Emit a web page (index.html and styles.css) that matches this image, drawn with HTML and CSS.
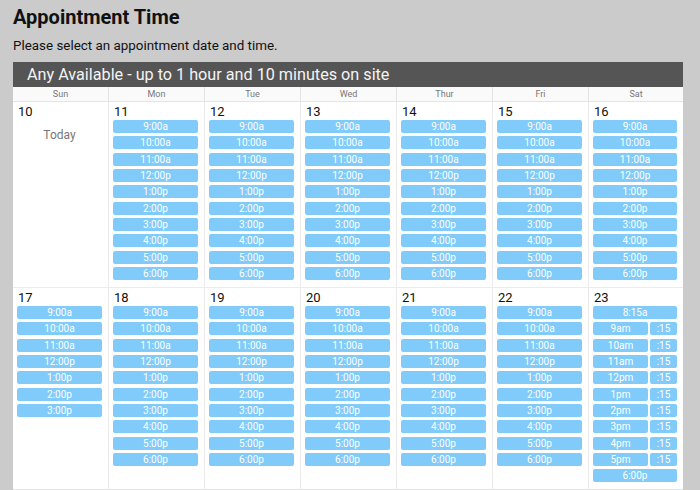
FILE: index.html
```html
<!DOCTYPE html>
<html>
<head>
<meta charset="utf-8">
<link rel="stylesheet" href="styles.css">
</head>
<body>
<h1 class="title">Appointment Time</h1>
<p class="sub">Please select an appointment date and time.</p>
<div class="panel">
  <div class="bar">Any Available - up to 1 hour and 10 minutes on site</div>
  <div class="cal">
    <div class="dow">Sun</div><div class="dow">Mon</div><div class="dow">Tue</div><div class="dow">Wed</div><div class="dow">Thur</div><div class="dow">Fri</div><div class="dow">Sat</div>

    <div class="cell"><div class="date">10</div><div class="today">Today</div></div>
    <div class="cell"><div class="date">11</div><div class="slots"><span class="slot">9:00a</span><span class="slot">10:00a</span><span class="slot">11:00a</span><span class="slot">12:00p</span><span class="slot">1:00p</span><span class="slot">2:00p</span><span class="slot">3:00p</span><span class="slot">4:00p</span><span class="slot">5:00p</span><span class="slot">6:00p</span></div></div>
    <div class="cell"><div class="date">12</div><div class="slots"><span class="slot">9:00a</span><span class="slot">10:00a</span><span class="slot">11:00a</span><span class="slot">12:00p</span><span class="slot">1:00p</span><span class="slot">2:00p</span><span class="slot">3:00p</span><span class="slot">4:00p</span><span class="slot">5:00p</span><span class="slot">6:00p</span></div></div>
    <div class="cell"><div class="date">13</div><div class="slots"><span class="slot">9:00a</span><span class="slot">10:00a</span><span class="slot">11:00a</span><span class="slot">12:00p</span><span class="slot">1:00p</span><span class="slot">2:00p</span><span class="slot">3:00p</span><span class="slot">4:00p</span><span class="slot">5:00p</span><span class="slot">6:00p</span></div></div>
    <div class="cell"><div class="date">14</div><div class="slots"><span class="slot">9:00a</span><span class="slot">10:00a</span><span class="slot">11:00a</span><span class="slot">12:00p</span><span class="slot">1:00p</span><span class="slot">2:00p</span><span class="slot">3:00p</span><span class="slot">4:00p</span><span class="slot">5:00p</span><span class="slot">6:00p</span></div></div>
    <div class="cell"><div class="date">15</div><div class="slots"><span class="slot">9:00a</span><span class="slot">10:00a</span><span class="slot">11:00a</span><span class="slot">12:00p</span><span class="slot">1:00p</span><span class="slot">2:00p</span><span class="slot">3:00p</span><span class="slot">4:00p</span><span class="slot">5:00p</span><span class="slot">6:00p</span></div></div>
    <div class="cell"><div class="date">16</div><div class="slots"><span class="slot">9:00a</span><span class="slot">10:00a</span><span class="slot">11:00a</span><span class="slot">12:00p</span><span class="slot">1:00p</span><span class="slot">2:00p</span><span class="slot">3:00p</span><span class="slot">4:00p</span><span class="slot">5:00p</span><span class="slot">6:00p</span></div></div>

    <div class="cell"><div class="date">17</div><div class="slots"><span class="slot">9:00a</span><span class="slot">10:00a</span><span class="slot">11:00a</span><span class="slot">12:00p</span><span class="slot">1:00p</span><span class="slot">2:00p</span><span class="slot">3:00p</span></div></div>
    <div class="cell"><div class="date">18</div><div class="slots"><span class="slot">9:00a</span><span class="slot">10:00a</span><span class="slot">11:00a</span><span class="slot">12:00p</span><span class="slot">1:00p</span><span class="slot">2:00p</span><span class="slot">3:00p</span><span class="slot">4:00p</span><span class="slot">5:00p</span><span class="slot">6:00p</span></div></div>
    <div class="cell"><div class="date">19</div><div class="slots"><span class="slot">9:00a</span><span class="slot">10:00a</span><span class="slot">11:00a</span><span class="slot">12:00p</span><span class="slot">1:00p</span><span class="slot">2:00p</span><span class="slot">3:00p</span><span class="slot">4:00p</span><span class="slot">5:00p</span><span class="slot">6:00p</span></div></div>
    <div class="cell"><div class="date">20</div><div class="slots"><span class="slot">9:00a</span><span class="slot">10:00a</span><span class="slot">11:00a</span><span class="slot">12:00p</span><span class="slot">1:00p</span><span class="slot">2:00p</span><span class="slot">3:00p</span><span class="slot">4:00p</span><span class="slot">5:00p</span><span class="slot">6:00p</span></div></div>
    <div class="cell"><div class="date">21</div><div class="slots"><span class="slot">9:00a</span><span class="slot">10:00a</span><span class="slot">11:00a</span><span class="slot">12:00p</span><span class="slot">1:00p</span><span class="slot">2:00p</span><span class="slot">3:00p</span><span class="slot">4:00p</span><span class="slot">5:00p</span><span class="slot">6:00p</span></div></div>
    <div class="cell"><div class="date">22</div><div class="slots"><span class="slot">9:00a</span><span class="slot">10:00a</span><span class="slot">11:00a</span><span class="slot">12:00p</span><span class="slot">1:00p</span><span class="slot">2:00p</span><span class="slot">3:00p</span><span class="slot">4:00p</span><span class="slot">5:00p</span><span class="slot">6:00p</span></div></div>
    <div class="cell"><div class="date">23</div><div class="slots">
      <span class="slot">8:15a</span>
      <div class="split"><span class="slot">9am</span><span class="slot q">:15</span></div>
      <div class="split"><span class="slot">10am</span><span class="slot q">:15</span></div>
      <div class="split"><span class="slot">11am</span><span class="slot q">:15</span></div>
      <div class="split"><span class="slot">12pm</span><span class="slot q">:15</span></div>
      <div class="split"><span class="slot">1pm</span><span class="slot q">:15</span></div>
      <div class="split"><span class="slot">2pm</span><span class="slot q">:15</span></div>
      <div class="split"><span class="slot">3pm</span><span class="slot q">:15</span></div>
      <div class="split"><span class="slot">4pm</span><span class="slot q">:15</span></div>
      <div class="split"><span class="slot">5pm</span><span class="slot q">:15</span></div>
      <span class="slot">6:00p</span>
    </div></div>
  </div>
</div>
</body>
</html>
```
FILE: styles.css
```css
html, body {
  margin: 0;
  padding: 0;
}
body {
  background: #cbcbcb;
  font-family: Roboto, "Liberation Sans", Arial, sans-serif;
  color: #111;
  padding: 0 17px 0 13px;
  width: 670px;
}
.title {
  margin: 0;
  padding-top: 5px;
  font-size: 20px;
  line-height: 24px;
  font-weight: 700;
  color: #111;
}
.sub {
  margin: 0;
  padding-top: 7px;
  font-size: 13.4px;
  line-height: 20px;
  color: #111;
}
.panel {
  margin-top: 6px;
  width: 670px;
  background: #fff;
}
.bar {
  background: #555555;
  color: #f4f4f4;
  font-size: 16.2px;
  line-height: 25px;
  height: 25px;
  padding-left: 14px;
}
.cal {
  display: grid;
  grid-template-columns: repeat(6, 96px) 1fr;
  background: #fff;
  border-bottom: 1px solid #e2e2e2;
}
.dow {
  background: #fafafa;
  color: #777;
  font-size: 9px;
  line-height: 14px;
  text-align: center;
  border-right: 1px solid #e4e4e4;
  border-bottom: 1px solid #e4e4e4;
}
.dow:nth-child(7n) {
  border-right: none;
}
.cell {
  border-right: 1px solid #ececec;
  border-bottom: 1px solid #ececec;
  padding: 2px 6px 7px 4px;
  display: flex;
  flex-direction: column;
  min-width: 0;
}
.cell:nth-child(7n) {
  border-right: none;
}
.cal > .cell:nth-last-child(-n+7) {
  border-bottom: none;
}
.date {
  font-size: 13px;
  line-height: 15px;
  color: #111;
  padding-left: 1px;
  margin-bottom: 1px;
}
.today {
  text-align: center;
  color: #777;
  font-size: 12px;
  line-height: 15px;
  margin-top: 8px;
}
.slots {
  display: flex;
  flex-direction: column;
  gap: 3.33px;
}
.slot {
  display: block;
  background: #80cbfa;
  color: #fff;
  font-size: 10px;
  line-height: 13px;
  height: 13px;
  text-align: center;
  border-radius: 2px;
}
.split {
  display: flex;
  gap: 2px;
}
.split .slot {
  flex: 1;
}
.split .slot.q {
  flex: 0 0 27px;
}
```
